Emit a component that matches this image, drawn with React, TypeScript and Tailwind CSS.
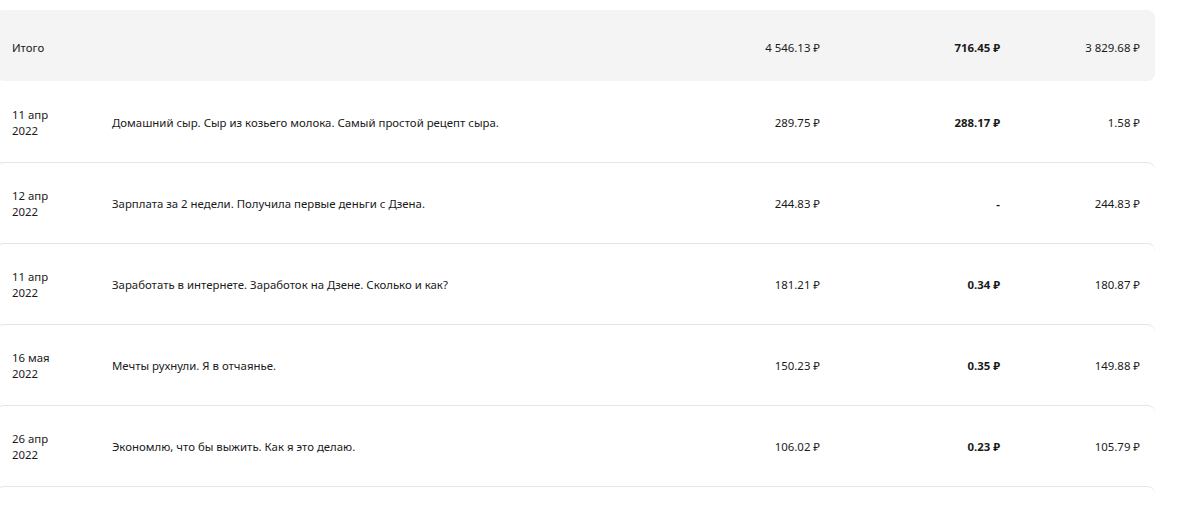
import React from "react";

const rows = [
  { d: "11 апр", y: "2022", t: "Домашний сыр. Сыр из козьего молока. Самый простой рецепт сыра.", a: "289.75 ₽", b: "288.17 ₽", c: "1.58 ₽" },
  { d: "12 апр", y: "2022", t: "Зарплата за 2 недели. Получила первые деньги с Дзена.", a: "244.83 ₽", b: "-", c: "244.83 ₽" },
  { d: "11 апр", y: "2022", t: "Заработать в интернете. Заработок на Дзене. Сколько и как?", a: "181.21 ₽", b: "0.34 ₽", c: "180.87 ₽" },
  { d: "16 мая", y: "2022", t: "Мечты рухнули. Я в отчаянье.", a: "150.23 ₽", b: "0.35 ₽", c: "149.88 ₽" },
  { d: "26 апр", y: "2022", t: "Экономлю, что бы выжить. Как я это делаю.", a: "106.02 ₽", b: "0.23 ₽", c: "105.79 ₽" },
];

export default function App() {
  return (
    <div className="bg-white h-[506px] overflow-hidden pt-[10px] text-[11.4px] leading-[16px] text-[#1a1a1a]" style={{ fontFamily: '"Noto Sans", "Open Sans", "DejaVu Sans", sans-serif' }}>
      <div className="-ml-[4px] w-[1159px]">
        <div className="flex items-center h-[71px] bg-[#f4f4f4] rounded-lg pl-[16px] pr-[15px] pt-[4px]">
          <div className="w-[100px]">Итого</div>
          <div className="flex-1" />
          <div className="w-[120px] text-right">4 546.13 ₽</div>
          <div className="w-[180px] text-right font-bold">716.45 ₽</div>
          <div className="w-[140px] text-right">3 829.68 ₽</div>
        </div>
        {rows.map((r, i) => (
          <div key={i} className={`flex items-center h-[81px] rounded-lg pl-[16px] pr-[15px] pt-[2px] ${i === 0 ? "" : "border-t border-[#e5e5e5]"}`}>
            <div className="w-[100px]">
              <div>{r.d}</div>
              <div>{r.y}</div>
            </div>
            <div className="flex-1">{r.t}</div>
            <div className="w-[120px] text-right">{r.a}</div>
            <div className="w-[180px] text-right font-bold">{r.b}</div>
            <div className="w-[140px] text-right">{r.c}</div>
          </div>
        ))}
        <div className="h-[81px] rounded-lg border-t border-[#e5e5e5]" />
      </div>
    </div>
  );
}
